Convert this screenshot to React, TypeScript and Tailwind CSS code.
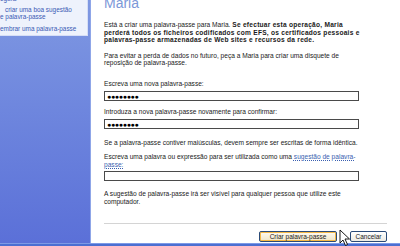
import React from "react";

const font = { fontFamily: '"Liberation Sans", Arial, sans-serif' };

const Field = ({ value }: { value?: string }) => (
  <div className="w-[255px] h-[10px] border border-[#4a4a4a] bg-white flex items-center pl-[2px]">
    {value && (
      <span className="text-[7px] leading-[7px] font-bold tracking-[-0.3px] text-black">{value}</span>
    )}
  </div>
);

const Cursor = () => (
  <svg width="12" height="18" viewBox="0 0 12 18" className="absolute left-[339px] top-[229px]">
    <path d="M1 1 L1 14 L4 11 L6.5 16.5 L8.5 15.5 L6 10 L10.5 10 Z" fill="#fff" stroke="#000" strokeWidth="0.9" strokeLinejoin="round" />
  </svg>
);

export default function App() {
  return (
    <div className="relative w-[400px] h-[246px] overflow-hidden flex flex-col bg-white text-[6.6px] leading-[7.5px] text-[#1a1a1a]" style={font}>
      <div className="flex flex-1 min-h-0">
        {/* left task pane */}
        <div className="w-[91px] shrink-0 flex flex-col bg-gradient-to-b from-[#7f98e2] to-[#5b70d8] border-r border-[#8fa6e8]">
          <div className="w-[88px] h-[36px] bg-[#eef2fc] border-b border-r border-[#d6def6] text-[#3a5ab4] text-[6.4px] flex flex-col">
            <div className="mt-[-5px]">egura</div>
            <div className="mt-[3px] pl-[5px]">criar uma boa sugestão</div>
            <div>e palavra-passe</div>
            <div className="mt-[4px]">embrar uma palavra-passe</div>
          </div>
        </div>

        {/* main content */}
        <div className="flex-1 flex flex-col pl-[13px] whitespace-nowrap">
          <div className="mt-[-4px] h-[14px] text-[14px] leading-[14px] text-[#7c98d8]">Maria</div>

          <div className="mt-[11px]">
            Está a criar uma palavra-passe para Maria.{" "}
            <b className="tracking-[0.25px]">Se efectuar esta operação, Maria</b>
            <br />
            <b className="tracking-[0.25px]">perderá todos os ficheiros codificados com EFS, os certificados pessoais e</b>
            <br />
            <b className="tracking-[0.25px]">palavras-passe armazenadas de Web sites e recursos da rede.</b>
          </div>

          <div className="mt-[8px]">
            Para evitar a perda de dados no futuro, peça a Maria para criar uma disquete de
            <br />
            reposição de palavra-passe.
          </div>

          <div className="mt-[13.5px]">Escreva uma nova palavra-passe:</div>
          <div className="mt-[3.5px]">
            <Field value="●●●●●●●●" />
          </div>

          <div className="mt-[6.5px]">Introduza a nova palavra-passe novamente para confirmar:</div>
          <div className="mt-[4px]">
            <Field value="●●●●●●●●" />
          </div>

          <div className="mt-[9.5px]">
            Se a palavra-passe contiver maiúsculas, devem sempre ser escritas de forma idêntica.
          </div>

          <div className="mt-[7px]">
            Escreva uma palavra ou expressão para ser utilizada como uma{" "}
            <span className="text-[#3a5fb0] underline decoration-dotted">sugestão de palavra-</span>
            <br />
            <span className="text-[#3a5fb0] underline decoration-dotted">passe:</span>
          </div>
          <div className="mt-[3px]">
            <Field />
          </div>

          <div className="mt-[8.5px] leading-[8.5px]">
            A sugestão de palavra-passe irá ser visível para qualquer pessoa que utilize este
            <br />
            computador.
          </div>

          <div className="mt-[16px] w-[283px] h-px bg-[#d4d4d4]" />

          <div className="mt-[7px] w-[283px] flex justify-end gap-[13px]">
            <button className="w-[78px] h-[11px] rounded-[2px] border border-[#2a4a78] bg-gradient-to-b from-[#fffaf0] to-[#f1e6c6] shadow-[inset_0_0_0_1px_#f5b846] text-[6.5px] leading-[9px] text-[#1a1a1a]">
              Criar palavra-passe
            </button>
            <button className="w-[37px] h-[11px] rounded-[2px] border border-[#2a4a78] bg-gradient-to-b from-white to-[#ecebe4] text-[6.5px] leading-[9px] text-[#1a1a1a]">
              Cancelar
            </button>
          </div>
        </div>
      </div>
      <div className="h-[3px] shrink-0 bg-[#4b6fd2] border-t border-[#7d9ae6]" />
      <Cursor />
    </div>
  );
}
